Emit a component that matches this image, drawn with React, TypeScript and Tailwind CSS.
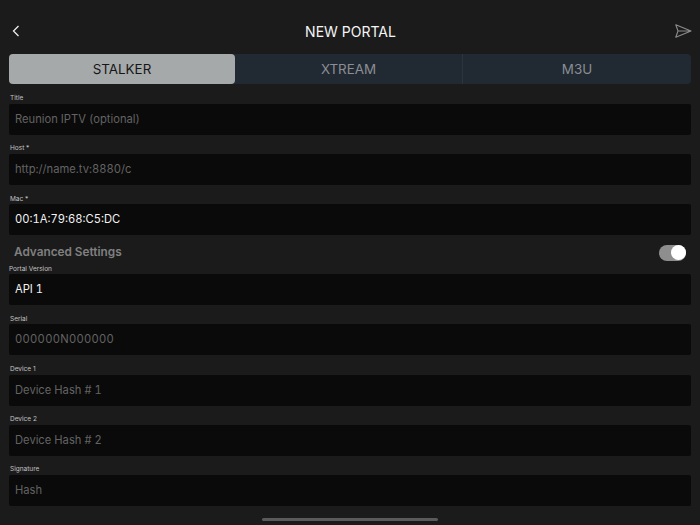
const font = "font-['Inter','Liberation_Sans',sans-serif]";

type FieldProps = {
  label: string;
  value: string;
  filled?: boolean;
  compact?: boolean;
  wide?: boolean;
};

function Field({ label, value, filled, compact, wide }: FieldProps) {
  return (
    <div className="flex flex-col">
      <div
        className={`flex items-center text-[6.5px] leading-none text-[#c4c4c4] ${
          compact ? 'h-[10.8px] pl-0' : 'h-[19.2px] pl-[1px] pt-[8px]'
        }`}
      >
        {label}
      </div>
      <div
        className={`flex h-[31px] items-center rounded-[2px] bg-[#0a0a0a] pl-[6px] text-[11.2px] tabular-nums ${
          filled ? 'text-[#f2f2f2]' : 'text-[#636363]'
        } ${wide ? 'tracking-[0.025em]' : ''}`}
      >
        {value}
      </div>
    </div>
  );
}

export default function App() {
  return (
    <div className={`relative h-[525px] w-[700px] overflow-hidden bg-[#1b1b1b] ${font}`}>
      <div className="flex h-[54px] items-center justify-between pb-[1px] pl-[12px] pr-[8px] pt-[9px]">
        <div className="flex w-[21px]">
          <svg width="8" height="12" viewBox="0 0 8 12" fill="none" stroke="#ececec" strokeWidth="1.3">
            <path d="M6.5 1 L1.5 6 L6.5 11" />
          </svg>
        </div>
        <div className="text-[14px] text-[#f5f5f5]">NEW PORTAL</div>
        <div className="flex w-[24px] justify-end">
          <svg width="17" height="14" viewBox="0 0 17 14" fill="none" stroke="#8c8c8c" strokeWidth="1.1" strokeLinejoin="round">
            <path d="M0.8 0.8 L16 7 L0.8 13.2 L3 7 Z M3 7 H16" />
          </svg>
        </div>
      </div>

      <div className="px-[9px]">
        <div className="flex h-[30px] rounded-[4px] bg-[#212933] text-[13.4px]">
          <div className="flex w-[226px] items-center justify-center rounded-[4px] bg-[#a6a9aa] text-[#161616]">STALKER</div>
          <div className="flex w-[228px] items-center justify-center border-r border-[#2c343e] text-[#8b8e92]">XTREAM</div>
          <div className="flex flex-1 items-center justify-center text-[#8b8e92]">M3U</div>
        </div>

        <div className="mt-[0.8px] flex flex-col">
          <Field label="Title" value="Reunion IPTV (optional)" />
          <Field label="Host *" value="http://name.tv:8880/c" />
          <Field label="Mac *" value="00:1A:79:68:C5:DC" filled />

          <div className="flex h-[28px] items-center justify-between pl-[5px] pr-[5px] pt-[7px]">
            <span className="text-[11.8px] font-semibold text-[#808080]">Advanced Settings</span>
            <div className="flex h-[16px] w-[27px] items-center justify-end rounded-full bg-[#8e8e8e]">
              <div className="h-[15px] w-[15px] rounded-full bg-white" />
            </div>
          </div>

          <Field label="Portal Version" value="API 1" filled compact />
          <Field label="Serial" value="000000N000000" wide />
          <Field label="Device 1" value="Device Hash # 1" />
          <Field label="Device 2" value="Device Hash # 2" />
          <Field label="Signature" value="Hash" />
        </div>
      </div>

      <div className="absolute bottom-[4px] left-[262px] h-[3px] w-[176px] rounded-full bg-[#5a5a5a]" />
    </div>
  );
}
